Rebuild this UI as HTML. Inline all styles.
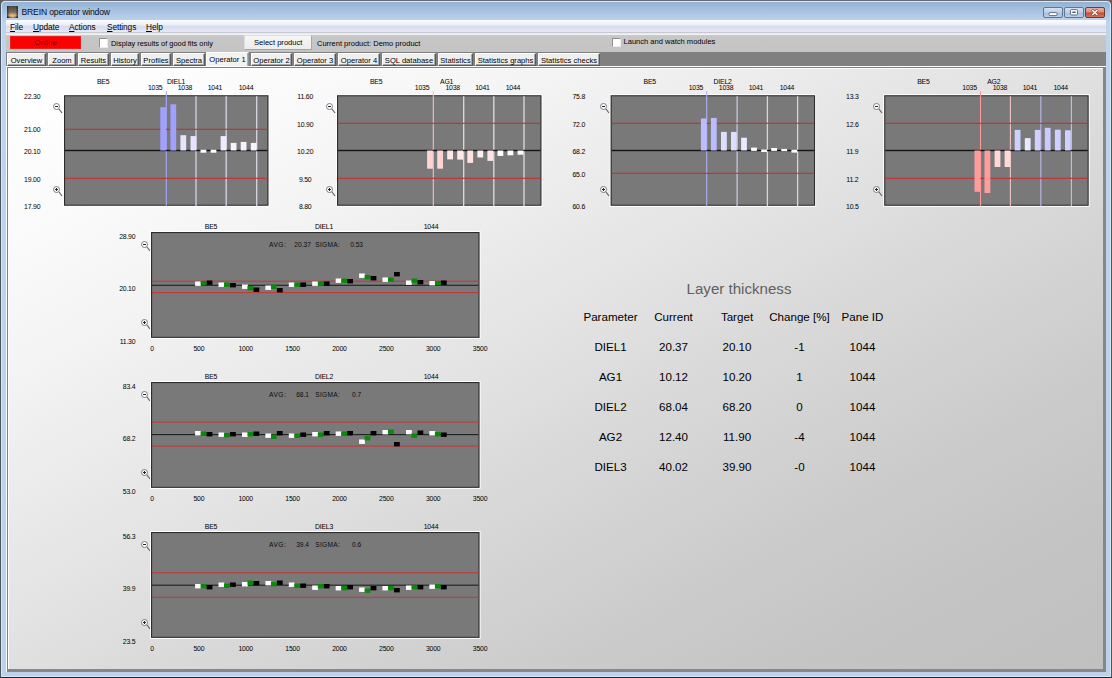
<!DOCTYPE html>
<html lang="en"><head><meta charset="utf-8"><title>BREIN operator window</title>
<style>
*{box-sizing:border-box;margin:0;padding:0}
html,body{width:1112px;height:678px;overflow:hidden;background:#5c5c5c}
body{font-family:"Liberation Sans",sans-serif;font-size:11px;color:#000;position:relative}
.abs{position:absolute}
#frame{position:absolute;left:0;top:0;width:1112px;height:678px;border-radius:5px 5px 0 0;
 background:linear-gradient(180deg,#93b1d1 0,#98b8d8 4px,#a6c2e0 9px,#b2cce8 15px,#bad0ea 19px,#bed3ec 22px,#bcd2ec 100%);
 border:1px solid #4a5560;border-top-color:#6a6c72;border-bottom-color:#1c2630}
#frame:before{content:"";position:absolute;left:0;top:0;right:0;bottom:0;border:1px solid #d8e6f5;border-radius:4px 4px 0 0}
#title{left:21.5px;top:7.4px;font-size:8.6px;letter-spacing:-0.16px;line-height:10px;color:#0a0a14;white-space:nowrap}
#appicon{left:7px;top:6.4px;width:11.2px;height:11.4px;background:linear-gradient(90deg,rgba(24,18,12,.65) 0,rgba(24,18,12,0) 22%,rgba(24,18,12,0) 78%,rgba(24,18,12,.65) 100%),radial-gradient(ellipse 55% 30% at 50% 84%,#f4c888 0,rgba(240,180,110,0) 100%),linear-gradient(180deg,#4c4742 0,#6a5f56 35%,#8c7664 60%,#b88454 80%,#2a2018 93%,#181410 100%)}
.cbtn{top:7px;height:11px;border:1px solid #5f7690;border-radius:2px;background:linear-gradient(180deg,#d4e2f2 0,#b9cde4 50%,#a4bcd8 51%,#bcd0e8 100%)}
#bclose{background:linear-gradient(180deg,#e8b0a2 0,#dc8a78 46%,#c24e36 54%,#d2745c 100%);border-color:#6a3a34}
#menubar{left:6px;top:19.8px;width:1100px;height:15.2px;background:linear-gradient(180deg,#fbfdff 0,#eef1f8 4.2px,#d8dcea 6.7px,#dde1f5 9.2px,#e6e8f4 11.6px,#c8cad2 12.4px,#c8cad2 12.9px,#eef0f5 13.6px,#f0f2f6 15.2px)}
.mi{top:2.2px;font-size:8.3px;letter-spacing:-0.1px;line-height:10px;white-space:nowrap}
.mi u{text-decoration:underline}
#toolbar{left:6px;top:34.8px;width:1100px;height:17px;background:linear-gradient(180deg,#cacaca 0,#c6c6c6 3px,#c4c4c4 100%)}
#tabstrip{left:6px;top:51.6px;width:1100px;height:14.4px;background:#808080}
.tab{top:1.6px;height:12.4px;background:#efefef;border-top:1px solid #fff;border-left:1px solid #fff;border-right:1px solid #404040;border-bottom:1px solid #404040;font-size:7.6px;line-height:13.4px;text-align:center;white-space:nowrap;color:#000;border-right-color:#5a5a5a;border-bottom-color:#5a5a5a;box-shadow:inset -1px -1px 0 #a6a6a6}
.tab.sel{top:0;height:15.4px;border-bottom:none;box-shadow:inset -1px 0 0 #b0b0b0;background:#f2f2f2;line-height:13.8px;border-right:1px solid #909090}
#paneo{left:6px;top:66px;width:1100px;height:606px;background:#fff}
#pane{left:7px;top:67px;width:1099px;height:605px;background:linear-gradient(to bottom right,rgb(255,255,255) 0%,rgb(254,254,254) 5%,rgb(252,252,252) 10%,rgb(250,250,250) 15%,rgb(247,247,247) 20%,rgb(244,244,244) 25%,rgb(240,240,240) 30%,rgb(236,236,236) 35%,rgb(232,232,232) 40%,rgb(228,228,228) 45%,rgb(224,224,224) 50%,rgb(219,219,219) 55%,rgb(215,215,215) 60%,rgb(211,211,211) 65%,rgb(207,207,207) 70%,rgb(203,203,203) 75%,rgb(200,200,200) 80%,rgb(197,197,197) 85%,rgb(195,195,195) 90%,rgb(193,193,193) 95%,rgb(192,192,192) 100%);border-top:1px solid #808080;border-left:1px solid #808080;border-right:3px solid #878787;border-bottom:3px solid #878787}
#pane:before{content:"";position:absolute;left:0;top:0;right:0;bottom:0;border-top:1px solid #fff;border-left:1px solid #fff}
.lbl{position:absolute;font-size:6.9px;letter-spacing:-0.2px;line-height:8px;white-space:nowrap;color:#000}
.plot{position:absolute;background:#808080;border:1px solid #3a3a3a}
.t{position:absolute;font-size:11.6px;line-height:14px;white-space:nowrap;text-align:center;width:80px;color:#000}
svg{position:absolute;overflow:visible}
</style></head><body>
<div id="frame"></div>

<div class="abs" id="appicon"></div>
<div class="abs" id="title">BREIN operator window</div>
<div class="abs cbtn" style="left:1043px;width:20px"><svg width="20" height="11" style="left:-1px;top:-1px"><rect x="6" y="5.6" width="8" height="3" rx="1" fill="#fff" stroke="#52627a" stroke-width="0.9"/></svg></div>
<div class="abs cbtn" style="left:1064px;width:20px"><svg width="20" height="11" style="left:-1px;top:-1px"><rect x="6.5" y="2.6" width="7" height="5.4" rx="1" fill="#fff" stroke="#52627a" stroke-width="0.9"/><rect x="8.3" y="4.6" width="3.4" height="1.4" fill="#4a5a70"/></svg></div>
<div class="abs cbtn" id="bclose" style="left:1085px;width:20px"><svg width="20" height="11" style="left:-1px;top:-1px"><path d="M7 2.8 L12.6 8.2 M12.6 2.8 L7 8.2" stroke="#7a3a30" stroke-width="2.6" fill="none"/><path d="M7.2 3 L12.4 8 M12.4 3 L7.2 8" stroke="#fff" stroke-width="1.5" fill="none"/></svg></div>
<div class="abs" id="menubar">
<div class="abs mi" style="left:4px"><u>F</u>ile</div>
<div class="abs mi" style="left:27px"><u>U</u>pdate</div>
<div class="abs mi" style="left:63px"><u>A</u>ctions</div>
<div class="abs mi" style="left:101px"><u>S</u>ettings</div>
<div class="abs mi" style="left:140px"><u>H</u>elp</div>
</div>
<div class="abs" id="toolbar">
<div class="abs" style="left:4px;top:1.7px;width:71px;height:12.5px;background:#ff0000;border:1px solid #e82020;color:#7c0000;font-size:7.8px;line-height:11px;text-align:center">Online</div>
<div class="abs" style="left:92.5px;top:3.5px;width:9px;height:9.5px;background:#fff;border:1px solid #909090;border-right-color:#ececec;border-bottom-color:#ececec"></div>
<div class="abs" style="left:105px;top:4px;font-size:7.4px;line-height:10px;white-space:nowrap">Display results of good fits only</div>
<div class="abs" style="left:238px;top:0px;width:68.4px;height:15px;background:linear-gradient(180deg,#f6f6f6,#ececec);border:1px solid #dedede;border-bottom-color:#a4a4a4;border-right-color:#a8a8a8;font-size:7.6px;line-height:13.6px;text-align:center">Select product</div>
<div class="abs" style="left:311px;top:4px;font-size:7.5px;line-height:10px;white-space:nowrap">Current product: Demo product</div>
<div class="abs" style="left:605.5px;top:2.8px;width:9px;height:9.5px;background:#fff;border:1px solid #909090;border-right-color:#ececec;border-bottom-color:#ececec"></div>
<div class="abs" style="left:617.5px;top:2.4px;font-size:7.55px;line-height:10px;white-space:nowrap">Launch and watch modules</div>
</div>
<div class="abs" id="tabstrip">
<div class="abs tab" style="left:1px;width:39px">Overview</div>
<div class="abs tab" style="left:42px;width:28px">Zoom</div>
<div class="abs tab" style="left:72px;width:31px">Results</div>
<div class="abs tab" style="left:105px;width:28px">History</div>
<div class="abs tab" style="left:135px;width:30px">Profiles</div>
<div class="abs tab" style="left:167px;width:32px">Spectra</div>
<div class="abs tab sel" style="left:200px;width:43px">Operator 1</div>
<div class="abs tab" style="left:245px;width:41px">Operator 2</div>
<div class="abs tab" style="left:288px;width:42px">Operator 3</div>
<div class="abs tab" style="left:332px;width:42px">Operator 4</div>
<div class="abs tab" style="left:376px;width:54px">SQL database</div>
<div class="abs tab" style="left:432px;width:35px">Statistics</div>
<div class="abs tab" style="left:469px;width:61px">Statistics graphs</div>
<div class="abs tab" style="left:532px;width:62px">Statistics checks</div>
</div>
<div class="abs" id="paneo"></div>
<div class="abs" id="pane"></div>
<div class="lbl" style="left:63.2px;width:80px;text-align:center;top:78.3px;">BE5</div>
<div class="lbl" style="left:167.0px;top:78.3px;">DIEL1</div>
<div class="lbl" style="left:115.19999999999999px;width:80px;text-align:center;top:84.4px;">1035</div>
<div class="lbl" style="left:144.9px;width:80px;text-align:center;top:84.4px;">1038</div>
<div class="lbl" style="left:174.9px;width:80px;text-align:center;top:84.4px;">1041</div>
<div class="lbl" style="left:206px;width:80px;text-align:center;top:84.4px;">1044</div>
<div class="lbl" style="left:-7.799999999999997px;width:80px;text-align:center;top:92.8px;">22.30</div>
<div class="lbl" style="left:-7.799999999999997px;width:80px;text-align:center;top:125.5px;">21.00</div>
<div class="lbl" style="left:-7.799999999999997px;width:80px;text-align:center;top:147.5px;">20.10</div>
<div class="lbl" style="left:-7.799999999999997px;width:80px;text-align:center;top:175.5px;">19.00</div>
<div class="lbl" style="left:-7.799999999999997px;width:80px;text-align:center;top:202.9px;">17.90</div>
<svg width="10" height="11" style="left:53.0px;top:103.2px" viewBox="0 0 10 11"><circle cx="3.5" cy="3.5" r="3" fill="#fff" stroke="#6a7078" stroke-width="0.9"/><path d="M6 6 L9 10" stroke="#666" stroke-width="1.2"/><path d="M2 3.5 H5" stroke="#1a2430" stroke-width="1"/></svg>
<svg width="10" height="11" style="left:53.0px;top:185.8px" viewBox="0 0 10 11"><circle cx="3.5" cy="3.5" r="3" fill="#fff" stroke="#6a7078" stroke-width="0.9"/><path d="M6 6 L9 10" stroke="#666" stroke-width="1.2"/><path d="M2 3.5 H5" stroke="#1a2430" stroke-width="1"/><path d="M3.5 2 V5" stroke="#1a2430" stroke-width="1"/></svg>
<svg width="1112" height="140" style="left:0;top:80px" viewBox="0 80 1112 140"><rect x="63.0" y="94.2" width="206.5" height="112.6" fill="#ffffff"/><rect x="64.0" y="95.2" width="204.5" height="110.6" fill="#2c2c2c"/><rect x="65.1" y="96.3" width="202.3" height="108.4" fill="#797979"/><rect x="165.75" y="91.2" width="1.1" height="114.9" fill="#a6a6ff"/><rect x="195.38" y="96.2" width="1.25" height="109.9" fill="#d8d8ec"/><rect x="225.57" y="96.2" width="1.25" height="109.9" fill="#dadae6"/><rect x="256.07" y="96.2" width="1.25" height="109.9" fill="#dadae6"/><rect x="65.0" y="128.75" width="202.5" height="1.1" fill="#c43030"/><rect x="65.0" y="177.75" width="202.5" height="1.1" fill="#c43030"/><rect x="65.0" y="149.8" width="202.5" height="1.4" fill="#141414"/><rect x="160.3" y="107.2" width="5.8" height="43.3" fill="#a0a0ff"/><rect x="170.4" y="104.3" width="5.8" height="46.2" fill="#a0a0ff"/><rect x="180.4" y="135.2" width="5.8" height="15.3" fill="#e4e4ff"/><rect x="190.5" y="136.1" width="5.8" height="14.4" fill="#e4e4ff"/><rect x="200.5" y="149.7" width="5.8" height="3.0" fill="#ffffff"/><rect x="210.6" y="149.7" width="5.8" height="3.0" fill="#ffffff"/><rect x="220.6" y="136.1" width="5.8" height="14.4" fill="#ececff"/><rect x="230.7" y="142.9" width="5.8" height="7.6" fill="#f4f4ff"/><rect x="240.7" y="141.9" width="5.8" height="8.6" fill="#f4f4ff"/><rect x="250.8" y="142.9" width="5.8" height="7.6" fill="#f4f4ff"/></svg>
<div class="lbl" style="left:336.2px;width:80px;text-align:center;top:78.3px;">BE5</div>
<div class="lbl" style="left:440.0px;top:78.3px;">AG1</div>
<div class="lbl" style="left:382.1px;width:80px;text-align:center;top:84.4px;">1035</div>
<div class="lbl" style="left:412.7px;width:80px;text-align:center;top:84.4px;">1038</div>
<div class="lbl" style="left:442.4px;width:80px;text-align:center;top:84.4px;">1041</div>
<div class="lbl" style="left:472.9px;width:80px;text-align:center;top:84.4px;">1044</div>
<div class="lbl" style="left:265.2px;width:80px;text-align:center;top:92.8px;">11.60</div>
<div class="lbl" style="left:265.2px;width:80px;text-align:center;top:120.7px;">10.90</div>
<div class="lbl" style="left:265.2px;width:80px;text-align:center;top:147.5px;">10.20</div>
<div class="lbl" style="left:265.2px;width:80px;text-align:center;top:175.5px;">9.50</div>
<div class="lbl" style="left:265.2px;width:80px;text-align:center;top:202.9px;">8.80</div>
<svg width="10" height="11" style="left:326.0px;top:103.2px" viewBox="0 0 10 11"><circle cx="3.5" cy="3.5" r="3" fill="#fff" stroke="#6a7078" stroke-width="0.9"/><path d="M6 6 L9 10" stroke="#666" stroke-width="1.2"/><path d="M2 3.5 H5" stroke="#1a2430" stroke-width="1"/></svg>
<svg width="10" height="11" style="left:326.0px;top:185.8px" viewBox="0 0 10 11"><circle cx="3.5" cy="3.5" r="3" fill="#fff" stroke="#6a7078" stroke-width="0.9"/><path d="M6 6 L9 10" stroke="#666" stroke-width="1.2"/><path d="M2 3.5 H5" stroke="#1a2430" stroke-width="1"/><path d="M3.5 2 V5" stroke="#1a2430" stroke-width="1"/></svg>
<svg width="1112" height="140" style="left:0;top:80px" viewBox="0 80 1112 140"><rect x="336.0" y="94.2" width="206.5" height="112.6" fill="#ffffff"/><rect x="337.0" y="95.2" width="204.5" height="110.6" fill="#2c2c2c"/><rect x="338.1" y="96.3" width="202.3" height="108.4" fill="#797979"/><rect x="432.75" y="91.2" width="1.1" height="114.9" fill="#f4c0c0"/><rect x="463.07" y="96.2" width="1.25" height="109.9" fill="#e8dcdc"/><rect x="493.18" y="96.2" width="1.25" height="109.9" fill="#e4e0e0"/><rect x="523.38" y="96.2" width="1.25" height="109.9" fill="#e4e0e0"/><rect x="338.0" y="122.75" width="202.5" height="1.1" fill="#c43030"/><rect x="338.0" y="177.75" width="202.5" height="1.1" fill="#c43030"/><rect x="338.0" y="149.8" width="202.5" height="1.4" fill="#141414"/><rect x="427.1" y="150.5" width="5.8" height="18.2" fill="#ffd4d4"/><rect x="437.2" y="150.5" width="5.8" height="18.2" fill="#ffd4d4"/><rect x="447.2" y="150.5" width="5.8" height="8.9" fill="#ffe8e8"/><rect x="457.2" y="150.5" width="5.8" height="9.1" fill="#ffe8e8"/><rect x="467.3" y="150.5" width="5.8" height="12.4" fill="#ffe2e2"/><rect x="477.4" y="150.5" width="5.8" height="7.0" fill="#fff0f0"/><rect x="487.4" y="150.5" width="5.8" height="10.4" fill="#ffe6e6"/><rect x="497.5" y="150.5" width="5.8" height="5.4" fill="#ffffff"/><rect x="507.5" y="150.5" width="5.8" height="4.8" fill="#ffffff"/><rect x="517.6" y="150.5" width="5.8" height="4.2" fill="#ffffff"/></svg>
<div class="lbl" style="left:609.8000000000001px;width:80px;text-align:center;top:78.3px;">BE5</div>
<div class="lbl" style="left:713.6px;top:78.3px;">DIEL2</div>
<div class="lbl" style="left:655.9px;width:80px;text-align:center;top:84.4px;">1035</div>
<div class="lbl" style="left:686.1px;width:80px;text-align:center;top:84.4px;">1038</div>
<div class="lbl" style="left:715.9px;width:80px;text-align:center;top:84.4px;">1041</div>
<div class="lbl" style="left:746.9px;width:80px;text-align:center;top:84.4px;">1044</div>
<div class="lbl" style="left:538.8000000000001px;width:80px;text-align:center;top:92.8px;">75.8</div>
<div class="lbl" style="left:538.8000000000001px;width:80px;text-align:center;top:120.7px;">72.0</div>
<div class="lbl" style="left:538.8000000000001px;width:80px;text-align:center;top:147.5px;">68.2</div>
<div class="lbl" style="left:538.8000000000001px;width:80px;text-align:center;top:171.0px;">65.0</div>
<div class="lbl" style="left:538.8000000000001px;width:80px;text-align:center;top:202.9px;">60.6</div>
<svg width="10" height="11" style="left:599.6px;top:103.2px" viewBox="0 0 10 11"><circle cx="3.5" cy="3.5" r="3" fill="#fff" stroke="#6a7078" stroke-width="0.9"/><path d="M6 6 L9 10" stroke="#666" stroke-width="1.2"/><path d="M2 3.5 H5" stroke="#1a2430" stroke-width="1"/></svg>
<svg width="10" height="11" style="left:599.6px;top:185.8px" viewBox="0 0 10 11"><circle cx="3.5" cy="3.5" r="3" fill="#fff" stroke="#6a7078" stroke-width="0.9"/><path d="M6 6 L9 10" stroke="#666" stroke-width="1.2"/><path d="M2 3.5 H5" stroke="#1a2430" stroke-width="1"/><path d="M3.5 2 V5" stroke="#1a2430" stroke-width="1"/></svg>
<svg width="1112" height="140" style="left:0;top:80px" viewBox="0 80 1112 140"><rect x="609.6" y="94.2" width="206.5" height="112.6" fill="#ffffff"/><rect x="610.6" y="95.2" width="204.5" height="110.6" fill="#2c2c2c"/><rect x="611.7" y="96.3" width="202.3" height="108.4" fill="#797979"/><rect x="706.15" y="91.2" width="1.1" height="114.9" fill="#b0b0f4"/><rect x="736.48" y="96.2" width="1.25" height="109.9" fill="#c8c8e8"/><rect x="766.77" y="96.2" width="1.25" height="109.9" fill="#d6d6e2"/><rect x="796.98" y="96.2" width="1.25" height="109.9" fill="#d6d6e2"/><rect x="611.6" y="122.75" width="202.5" height="1.1" fill="#c43030"/><rect x="611.6" y="172.75" width="202.5" height="1.1" fill="#c43030"/><rect x="611.6" y="149.8" width="202.5" height="1.4" fill="#141414"/><rect x="700.9" y="118.5" width="5.8" height="32.0" fill="#bcbcff"/><rect x="710.9" y="117.9" width="5.8" height="32.6" fill="#bcbcff"/><rect x="721.0" y="131.9" width="5.8" height="18.6" fill="#dedeff"/><rect x="731.0" y="131.9" width="5.8" height="18.6" fill="#dedeff"/><rect x="741.1" y="137.7" width="5.8" height="12.8" fill="#e8e8ff"/><rect x="751.1" y="147.6" width="5.8" height="3.3" fill="#ffffff"/><rect x="761.2" y="149.5" width="5.8" height="2.5" fill="#ffffff"/><rect x="771.2" y="148" width="5.8" height="2.9" fill="#ffffff"/><rect x="781.3" y="148.9" width="5.8" height="2.2" fill="#ffffff"/><rect x="791.4" y="149.7" width="5.8" height="2.9" fill="#ffffff"/></svg>
<div class="lbl" style="left:883.4000000000001px;width:80px;text-align:center;top:78.3px;">BE5</div>
<div class="lbl" style="left:987.2px;top:78.3px;">AG2</div>
<div class="lbl" style="left:929.6px;width:80px;text-align:center;top:84.4px;">1035</div>
<div class="lbl" style="left:959.9px;width:80px;text-align:center;top:84.4px;">1038</div>
<div class="lbl" style="left:989.9000000000001px;width:80px;text-align:center;top:84.4px;">1041</div>
<div class="lbl" style="left:1020.7px;width:80px;text-align:center;top:84.4px;">1044</div>
<div class="lbl" style="left:812.4000000000001px;width:80px;text-align:center;top:92.8px;">13.3</div>
<div class="lbl" style="left:812.4000000000001px;width:80px;text-align:center;top:120.7px;">12.6</div>
<div class="lbl" style="left:812.4000000000001px;width:80px;text-align:center;top:147.5px;">11.9</div>
<div class="lbl" style="left:812.4000000000001px;width:80px;text-align:center;top:175.5px;">11.2</div>
<div class="lbl" style="left:812.4000000000001px;width:80px;text-align:center;top:202.9px;">10.5</div>
<svg width="10" height="11" style="left:873.2px;top:103.2px" viewBox="0 0 10 11"><circle cx="3.5" cy="3.5" r="3" fill="#fff" stroke="#6a7078" stroke-width="0.9"/><path d="M6 6 L9 10" stroke="#666" stroke-width="1.2"/><path d="M2 3.5 H5" stroke="#1a2430" stroke-width="1"/></svg>
<svg width="10" height="11" style="left:873.2px;top:185.8px" viewBox="0 0 10 11"><circle cx="3.5" cy="3.5" r="3" fill="#fff" stroke="#6a7078" stroke-width="0.9"/><path d="M6 6 L9 10" stroke="#666" stroke-width="1.2"/><path d="M2 3.5 H5" stroke="#1a2430" stroke-width="1"/><path d="M3.5 2 V5" stroke="#1a2430" stroke-width="1"/></svg>
<svg width="1112" height="140" style="left:0;top:80px" viewBox="0 80 1112 140"><rect x="883.2" y="94.2" width="206.5" height="112.6" fill="#ffffff"/><rect x="884.2" y="95.2" width="204.5" height="110.6" fill="#2c2c2c"/><rect x="885.3" y="96.3" width="202.3" height="108.4" fill="#797979"/><rect x="979.95" y="91.2" width="1.1" height="114.9" fill="#ff9898"/><rect x="1009.85" y="96.2" width="1.1" height="109.9" fill="#ecc4c4"/><rect x="1040.25" y="96.2" width="1.1" height="109.9" fill="#b8b8ec"/><rect x="1070.85" y="96.2" width="1.1" height="109.9" fill="#c0c0ec"/><rect x="885.2" y="122.75" width="202.5" height="1.1" fill="#c43030"/><rect x="885.2" y="177.75" width="202.5" height="1.1" fill="#c43030"/><rect x="885.2" y="149.8" width="202.5" height="1.4" fill="#141414"/><rect x="974.5" y="150.5" width="5.8" height="41.3" fill="#ff9c9c"/><rect x="984.5" y="150.5" width="5.8" height="42.5" fill="#ff9c9c"/><rect x="994.6" y="150.5" width="5.8" height="16.5" fill="#ffd8d8"/><rect x="1004.6" y="150.5" width="5.8" height="16.5" fill="#ffd8d8"/><rect x="1014.7" y="129.9" width="5.8" height="20.6" fill="#d0d0ff"/><rect x="1024.8" y="138.1" width="5.8" height="12.4" fill="#e8e8ff"/><rect x="1034.8" y="129.9" width="5.8" height="20.6" fill="#d0d0ff"/><rect x="1044.8" y="127.8" width="5.8" height="22.7" fill="#cacaff"/><rect x="1054.9" y="129.7" width="5.8" height="20.8" fill="#d0d0ff"/><rect x="1065.0" y="130.3" width="5.8" height="20.2" fill="#d0d0ff"/></svg>
<div class="lbl" style="left:171px;width:80px;text-align:center;top:223.1px;">BE5</div>
<div class="lbl" style="left:284px;width:80px;text-align:center;top:223.1px;">DIEL1</div>
<div class="lbl" style="left:391px;width:80px;text-align:center;top:223.1px;">1044</div>
<div class="lbl" style="left:55.400000000000006px;width:80px;text-align:right;top:232.9px;">28.90</div>
<div class="lbl" style="left:55.400000000000006px;width:80px;text-align:right;top:284.9px;">20.10</div>
<div class="lbl" style="left:55.400000000000006px;width:80px;text-align:right;top:338.1px;">11.30</div>
<svg width="10" height="11" style="left:140.6px;top:240.6px" viewBox="0 0 10 11"><circle cx="3.5" cy="3.5" r="3" fill="#fff" stroke="#6a7078" stroke-width="0.9"/><path d="M6 6 L9 10" stroke="#666" stroke-width="1.2"/><path d="M2 3.5 H5" stroke="#1a2430" stroke-width="1"/></svg>
<svg width="10" height="11" style="left:140.5px;top:318.5px" viewBox="0 0 10 11"><circle cx="3.5" cy="3.5" r="3" fill="#fff" stroke="#6a7078" stroke-width="0.9"/><path d="M6 6 L9 10" stroke="#666" stroke-width="1.2"/><path d="M2 3.5 H5" stroke="#1a2430" stroke-width="1"/><path d="M3.5 2 V5" stroke="#1a2430" stroke-width="1"/></svg>
<div class="lbl" style="left:112.0px;width:80px;text-align:center;top:344.9px;">0</div>
<div class="lbl" style="left:158.86px;width:80px;text-align:center;top:344.9px;">500</div>
<div class="lbl" style="left:205.72px;width:80px;text-align:center;top:344.9px;">1000</div>
<div class="lbl" style="left:252.57999999999998px;width:80px;text-align:center;top:344.9px;">1500</div>
<div class="lbl" style="left:299.44px;width:80px;text-align:center;top:344.9px;">2000</div>
<div class="lbl" style="left:346.3px;width:80px;text-align:center;top:344.9px;">2500</div>
<div class="lbl" style="left:393.15999999999997px;width:80px;text-align:center;top:344.9px;">3000</div>
<div class="lbl" style="left:440.02px;width:80px;text-align:center;top:344.9px;">3500</div>
<svg width="332.6" height="109.9" style="left:149.2px;top:229.9px" viewBox="-2 -2 332.6 109.9"><rect x="-1" y="-1" width="330.6" height="107.9" fill="#ffffff"/><rect x="0" y="0" width="328.6" height="105.9" fill="#2c2c2c"/><rect x="1.1" y="1.1" width="326.4" height="103.7" fill="#797979"/><rect x="1" y="48.70" width="326.6" height="1" fill="#c83434"/><rect x="1" y="60.10" width="326.6" height="1" fill="#c83434"/><rect x="1" y="52.75" width="326.6" height="1.1" fill="#202020"/><text x="118.1" y="15" font-size="6.6" fill="#0c0c0c" font-family='"Liberation Sans", sans-serif' letter-spacing="0.5">AVG:</text><text x="151.6" y="15" font-size="6.6" fill="#0c0c0c" font-family='"Liberation Sans", sans-serif' text-anchor="middle">20.37</text><text x="164.3" y="15" font-size="6.6" fill="#0c0c0c" font-family='"Liberation Sans", sans-serif' letter-spacing="0.3">SIGMA:</text><text x="205.6" y="15" font-size="6.6" fill="#0c0c0c" font-family='"Liberation Sans", sans-serif' text-anchor="middle">0.53</text><rect x="44.1" y="49.5" width="5.8" height="4.4" fill="#ffffff"/><rect x="49.6" y="49.0" width="5.8" height="4.4" fill="#0a8a0a"/><rect x="55.6" y="48.5" width="5.8" height="4.4" fill="#000000"/><rect x="67.5" y="50.5" width="5.8" height="4.4" fill="#ffffff"/><rect x="73.0" y="50.5" width="5.8" height="4.4" fill="#0a8a0a"/><rect x="79.0" y="51.0" width="5.8" height="4.4" fill="#000000"/><rect x="91.0" y="52.5" width="5.8" height="4.4" fill="#ffffff"/><rect x="96.5" y="54.0" width="5.8" height="4.4" fill="#0a8a0a"/><rect x="102.5" y="55.5" width="5.8" height="4.4" fill="#000000"/><rect x="114.4" y="53.5" width="5.8" height="4.4" fill="#ffffff"/><rect x="119.9" y="52.5" width="5.8" height="4.4" fill="#0a8a0a"/><rect x="125.9" y="56.0" width="5.8" height="4.4" fill="#000000"/><rect x="137.8" y="50.5" width="5.8" height="4.4" fill="#ffffff"/><rect x="143.3" y="50.5" width="5.8" height="4.4" fill="#0a8a0a"/><rect x="149.3" y="50.5" width="5.8" height="4.4" fill="#000000"/><rect x="161.2" y="49.5" width="5.8" height="4.4" fill="#ffffff"/><rect x="166.8" y="49.5" width="5.8" height="4.4" fill="#0a8a0a"/><rect x="172.8" y="49.5" width="5.8" height="4.4" fill="#000000"/><rect x="184.7" y="46.5" width="5.8" height="4.4" fill="#ffffff"/><rect x="190.2" y="46.5" width="5.8" height="4.4" fill="#0a8a0a"/><rect x="196.2" y="47.0" width="5.8" height="4.4" fill="#000000"/><rect x="208.1" y="41.5" width="5.8" height="4.4" fill="#ffffff"/><rect x="213.6" y="43.0" width="5.8" height="4.4" fill="#0a8a0a"/><rect x="219.6" y="44.0" width="5.8" height="4.4" fill="#000000"/><rect x="231.5" y="45.5" width="5.8" height="4.4" fill="#ffffff"/><rect x="237.0" y="45.5" width="5.8" height="4.4" fill="#0a8a0a"/><rect x="243.0" y="40.0" width="5.8" height="4.4" fill="#000000"/><rect x="255.0" y="48.5" width="5.8" height="4.4" fill="#ffffff"/><rect x="260.5" y="46.5" width="5.8" height="4.4" fill="#0a8a0a"/><rect x="266.5" y="48.0" width="5.8" height="4.4" fill="#000000"/><rect x="278.4" y="49.0" width="5.8" height="4.4" fill="#ffffff"/><rect x="283.9" y="49.0" width="5.8" height="4.4" fill="#0a8a0a"/><rect x="289.9" y="48.5" width="5.8" height="4.4" fill="#000000"/></svg>
<div class="lbl" style="left:171px;width:80px;text-align:center;top:373.09999999999997px;">BE5</div>
<div class="lbl" style="left:284px;width:80px;text-align:center;top:373.09999999999997px;">DIEL2</div>
<div class="lbl" style="left:391px;width:80px;text-align:center;top:373.09999999999997px;">1044</div>
<div class="lbl" style="left:55.400000000000006px;width:80px;text-align:right;top:382.9px;">83.4</div>
<div class="lbl" style="left:55.400000000000006px;width:80px;text-align:right;top:434.9px;">68.2</div>
<div class="lbl" style="left:55.400000000000006px;width:80px;text-align:right;top:488.09999999999997px;">53.0</div>
<svg width="10" height="11" style="left:140.6px;top:390.59999999999997px" viewBox="0 0 10 11"><circle cx="3.5" cy="3.5" r="3" fill="#fff" stroke="#6a7078" stroke-width="0.9"/><path d="M6 6 L9 10" stroke="#666" stroke-width="1.2"/><path d="M2 3.5 H5" stroke="#1a2430" stroke-width="1"/></svg>
<svg width="10" height="11" style="left:140.5px;top:468.5px" viewBox="0 0 10 11"><circle cx="3.5" cy="3.5" r="3" fill="#fff" stroke="#6a7078" stroke-width="0.9"/><path d="M6 6 L9 10" stroke="#666" stroke-width="1.2"/><path d="M2 3.5 H5" stroke="#1a2430" stroke-width="1"/><path d="M3.5 2 V5" stroke="#1a2430" stroke-width="1"/></svg>
<div class="lbl" style="left:112.0px;width:80px;text-align:center;top:494.9px;">0</div>
<div class="lbl" style="left:158.86px;width:80px;text-align:center;top:494.9px;">500</div>
<div class="lbl" style="left:205.72px;width:80px;text-align:center;top:494.9px;">1000</div>
<div class="lbl" style="left:252.57999999999998px;width:80px;text-align:center;top:494.9px;">1500</div>
<div class="lbl" style="left:299.44px;width:80px;text-align:center;top:494.9px;">2000</div>
<div class="lbl" style="left:346.3px;width:80px;text-align:center;top:494.9px;">2500</div>
<div class="lbl" style="left:393.15999999999997px;width:80px;text-align:center;top:494.9px;">3000</div>
<div class="lbl" style="left:440.02px;width:80px;text-align:center;top:494.9px;">3500</div>
<svg width="332.6" height="109.9" style="left:149.2px;top:379.9px" viewBox="-2 -2 332.6 109.9"><rect x="-1" y="-1" width="330.6" height="107.9" fill="#ffffff"/><rect x="0" y="0" width="328.6" height="105.9" fill="#2c2c2c"/><rect x="1.1" y="1.1" width="326.4" height="103.7" fill="#797979"/><rect x="1" y="39.60" width="326.6" height="1" fill="#c83434"/><rect x="1" y="63.60" width="326.6" height="1" fill="#c83434"/><rect x="1" y="52.05" width="326.6" height="1.1" fill="#202020"/><text x="118.1" y="15" font-size="6.6" fill="#0c0c0c" font-family='"Liberation Sans", sans-serif' letter-spacing="0.5">AVG:</text><text x="151.6" y="15" font-size="6.6" fill="#0c0c0c" font-family='"Liberation Sans", sans-serif' text-anchor="middle">68.1</text><text x="164.3" y="15" font-size="6.6" fill="#0c0c0c" font-family='"Liberation Sans", sans-serif' letter-spacing="0.3">SIGMA:</text><text x="205.6" y="15" font-size="6.6" fill="#0c0c0c" font-family='"Liberation Sans", sans-serif' text-anchor="middle">0.7</text><rect x="44.1" y="49.0" width="5.8" height="4.4" fill="#ffffff"/><rect x="49.6" y="49.5" width="5.8" height="4.4" fill="#0a8a0a"/><rect x="55.6" y="50.0" width="5.8" height="4.4" fill="#000000"/><rect x="67.5" y="50.5" width="5.8" height="4.4" fill="#ffffff"/><rect x="73.0" y="51.0" width="5.8" height="4.4" fill="#0a8a0a"/><rect x="79.0" y="50.0" width="5.8" height="4.4" fill="#000000"/><rect x="91.0" y="50.5" width="5.8" height="4.4" fill="#ffffff"/><rect x="96.5" y="50.0" width="5.8" height="4.4" fill="#0a8a0a"/><rect x="102.5" y="49.5" width="5.8" height="4.4" fill="#000000"/><rect x="114.4" y="51.5" width="5.8" height="4.4" fill="#ffffff"/><rect x="119.9" y="52.5" width="5.8" height="4.4" fill="#0a8a0a"/><rect x="125.9" y="49.0" width="5.8" height="4.4" fill="#000000"/><rect x="137.8" y="51.5" width="5.8" height="4.4" fill="#ffffff"/><rect x="143.3" y="51.5" width="5.8" height="4.4" fill="#0a8a0a"/><rect x="149.3" y="50.5" width="5.8" height="4.4" fill="#000000"/><rect x="161.2" y="50.0" width="5.8" height="4.4" fill="#ffffff"/><rect x="166.8" y="50.5" width="5.8" height="4.4" fill="#0a8a0a"/><rect x="172.8" y="49.0" width="5.8" height="4.4" fill="#000000"/><rect x="184.7" y="49.5" width="5.8" height="4.4" fill="#ffffff"/><rect x="190.2" y="49.5" width="5.8" height="4.4" fill="#0a8a0a"/><rect x="196.2" y="49.0" width="5.8" height="4.4" fill="#000000"/><rect x="208.1" y="57.5" width="5.8" height="4.4" fill="#ffffff"/><rect x="213.6" y="54.0" width="5.8" height="4.4" fill="#0a8a0a"/><rect x="219.6" y="49.0" width="5.8" height="4.4" fill="#000000"/><rect x="231.5" y="48.0" width="5.8" height="4.4" fill="#ffffff"/><rect x="237.0" y="47.5" width="5.8" height="4.4" fill="#0a8a0a"/><rect x="243.0" y="60.0" width="5.8" height="4.4" fill="#000000"/><rect x="255.0" y="48.0" width="5.8" height="4.4" fill="#ffffff"/><rect x="260.5" y="51.5" width="5.8" height="4.4" fill="#0a8a0a"/><rect x="266.5" y="48.5" width="5.8" height="4.4" fill="#000000"/><rect x="278.4" y="49.0" width="5.8" height="4.4" fill="#ffffff"/><rect x="283.9" y="50.0" width="5.8" height="4.4" fill="#0a8a0a"/><rect x="289.9" y="50.5" width="5.8" height="4.4" fill="#000000"/></svg>
<div class="lbl" style="left:171px;width:80px;text-align:center;top:523.1px;">BE5</div>
<div class="lbl" style="left:284px;width:80px;text-align:center;top:523.1px;">DIEL3</div>
<div class="lbl" style="left:391px;width:80px;text-align:center;top:523.1px;">1044</div>
<div class="lbl" style="left:55.400000000000006px;width:80px;text-align:right;top:532.9px;">56.3</div>
<div class="lbl" style="left:55.400000000000006px;width:80px;text-align:right;top:584.9px;">39.9</div>
<div class="lbl" style="left:55.400000000000006px;width:80px;text-align:right;top:638.1px;">23.5</div>
<svg width="10" height="11" style="left:140.6px;top:540.6px" viewBox="0 0 10 11"><circle cx="3.5" cy="3.5" r="3" fill="#fff" stroke="#6a7078" stroke-width="0.9"/><path d="M6 6 L9 10" stroke="#666" stroke-width="1.2"/><path d="M2 3.5 H5" stroke="#1a2430" stroke-width="1"/></svg>
<svg width="10" height="11" style="left:140.5px;top:618.5px" viewBox="0 0 10 11"><circle cx="3.5" cy="3.5" r="3" fill="#fff" stroke="#6a7078" stroke-width="0.9"/><path d="M6 6 L9 10" stroke="#666" stroke-width="1.2"/><path d="M2 3.5 H5" stroke="#1a2430" stroke-width="1"/><path d="M3.5 2 V5" stroke="#1a2430" stroke-width="1"/></svg>
<div class="lbl" style="left:112.0px;width:80px;text-align:center;top:644.9px;">0</div>
<div class="lbl" style="left:158.86px;width:80px;text-align:center;top:644.9px;">500</div>
<div class="lbl" style="left:205.72px;width:80px;text-align:center;top:644.9px;">1000</div>
<div class="lbl" style="left:252.57999999999998px;width:80px;text-align:center;top:644.9px;">1500</div>
<div class="lbl" style="left:299.44px;width:80px;text-align:center;top:644.9px;">2000</div>
<div class="lbl" style="left:346.3px;width:80px;text-align:center;top:644.9px;">2500</div>
<div class="lbl" style="left:393.15999999999997px;width:80px;text-align:center;top:644.9px;">3000</div>
<div class="lbl" style="left:440.02px;width:80px;text-align:center;top:644.9px;">3500</div>
<svg width="332.6" height="109.9" style="left:149.2px;top:529.9px" viewBox="-2 -2 332.6 109.9"><rect x="-1" y="-1" width="330.6" height="107.9" fill="#ffffff"/><rect x="0" y="0" width="328.6" height="105.9" fill="#2c2c2c"/><rect x="1.1" y="1.1" width="326.4" height="103.7" fill="#797979"/><rect x="1" y="40.30" width="326.6" height="1" fill="#c83434"/><rect x="1" y="64.80" width="326.6" height="1" fill="#c83434"/><rect x="1" y="52.65" width="326.6" height="1.1" fill="#202020"/><text x="118.1" y="15" font-size="6.6" fill="#0c0c0c" font-family='"Liberation Sans", sans-serif' letter-spacing="0.5">AVG:</text><text x="151.6" y="15" font-size="6.6" fill="#0c0c0c" font-family='"Liberation Sans", sans-serif' text-anchor="middle">39.4</text><text x="164.3" y="15" font-size="6.6" fill="#0c0c0c" font-family='"Liberation Sans", sans-serif' letter-spacing="0.3">SIGMA:</text><text x="205.6" y="15" font-size="6.6" fill="#0c0c0c" font-family='"Liberation Sans", sans-serif' text-anchor="middle">0.6</text><rect x="44.1" y="52.0" width="5.8" height="4.4" fill="#ffffff"/><rect x="49.6" y="52.0" width="5.8" height="4.4" fill="#0a8a0a"/><rect x="55.6" y="53.0" width="5.8" height="4.4" fill="#000000"/><rect x="67.5" y="50.5" width="5.8" height="4.4" fill="#ffffff"/><rect x="73.0" y="51.5" width="5.8" height="4.4" fill="#0a8a0a"/><rect x="79.0" y="50.5" width="5.8" height="4.4" fill="#000000"/><rect x="91.0" y="50.0" width="5.8" height="4.4" fill="#ffffff"/><rect x="96.5" y="48.5" width="5.8" height="4.4" fill="#0a8a0a"/><rect x="102.5" y="49.0" width="5.8" height="4.4" fill="#000000"/><rect x="114.4" y="49.0" width="5.8" height="4.4" fill="#ffffff"/><rect x="119.9" y="50.0" width="5.8" height="4.4" fill="#0a8a0a"/><rect x="125.9" y="48.5" width="5.8" height="4.4" fill="#000000"/><rect x="137.8" y="50.5" width="5.8" height="4.4" fill="#ffffff"/><rect x="143.3" y="51.5" width="5.8" height="4.4" fill="#0a8a0a"/><rect x="149.3" y="51.5" width="5.8" height="4.4" fill="#000000"/><rect x="161.2" y="53.5" width="5.8" height="4.4" fill="#ffffff"/><rect x="166.8" y="52.0" width="5.8" height="4.4" fill="#0a8a0a"/><rect x="172.8" y="52.0" width="5.8" height="4.4" fill="#000000"/><rect x="184.7" y="54.0" width="5.8" height="4.4" fill="#ffffff"/><rect x="190.2" y="54.0" width="5.8" height="4.4" fill="#0a8a0a"/><rect x="196.2" y="53.0" width="5.8" height="4.4" fill="#000000"/><rect x="208.1" y="55.5" width="5.8" height="4.4" fill="#ffffff"/><rect x="213.6" y="56.5" width="5.8" height="4.4" fill="#0a8a0a"/><rect x="219.6" y="54.0" width="5.8" height="4.4" fill="#000000"/><rect x="231.5" y="54.0" width="5.8" height="4.4" fill="#ffffff"/><rect x="237.0" y="54.0" width="5.8" height="4.4" fill="#0a8a0a"/><rect x="243.0" y="56.0" width="5.8" height="4.4" fill="#000000"/><rect x="255.0" y="53.5" width="5.8" height="4.4" fill="#ffffff"/><rect x="260.5" y="53.0" width="5.8" height="4.4" fill="#0a8a0a"/><rect x="266.5" y="53.0" width="5.8" height="4.4" fill="#000000"/><rect x="278.4" y="52.5" width="5.8" height="4.4" fill="#ffffff"/><rect x="283.9" y="52.0" width="5.8" height="4.4" fill="#0a8a0a"/><rect x="289.9" y="53.0" width="5.8" height="4.4" fill="#000000"/></svg>
<div class="abs" style="left:639px;top:280px;width:200px;text-align:center;font-size:15.1px;line-height:18px;color:#606060;white-space:nowrap">Layer thickness</div>
<div class="t" style="left:570.5px;top:310px">Parameter</div>
<div class="t" style="left:633.5px;top:310px">Current</div>
<div class="t" style="left:697px;top:310px">Target</div>
<div class="t" style="left:759.5px;top:310px">Change [%]</div>
<div class="t" style="left:822.5px;top:310px">Pane ID</div>
<div class="t" style="left:570.5px;top:340px">DIEL1</div>
<div class="t" style="left:633.5px;top:340px">20.37</div>
<div class="t" style="left:697px;top:340px">20.10</div>
<div class="t" style="left:759.5px;top:340px">-1</div>
<div class="t" style="left:822.5px;top:340px">1044</div>
<div class="t" style="left:570.5px;top:370px">AG1</div>
<div class="t" style="left:633.5px;top:370px">10.12</div>
<div class="t" style="left:697px;top:370px">10.20</div>
<div class="t" style="left:759.5px;top:370px">1</div>
<div class="t" style="left:822.5px;top:370px">1044</div>
<div class="t" style="left:570.5px;top:400px">DIEL2</div>
<div class="t" style="left:633.5px;top:400px">68.04</div>
<div class="t" style="left:697px;top:400px">68.20</div>
<div class="t" style="left:759.5px;top:400px">0</div>
<div class="t" style="left:822.5px;top:400px">1044</div>
<div class="t" style="left:570.5px;top:430px">AG2</div>
<div class="t" style="left:633.5px;top:430px">12.40</div>
<div class="t" style="left:697px;top:430px">11.90</div>
<div class="t" style="left:759.5px;top:430px">-4</div>
<div class="t" style="left:822.5px;top:430px">1044</div>
<div class="t" style="left:570.5px;top:460px">DIEL3</div>
<div class="t" style="left:633.5px;top:460px">40.02</div>
<div class="t" style="left:697px;top:460px">39.90</div>
<div class="t" style="left:759.5px;top:460px">-0</div>
<div class="t" style="left:822.5px;top:460px">1044</div>
</body></html>
